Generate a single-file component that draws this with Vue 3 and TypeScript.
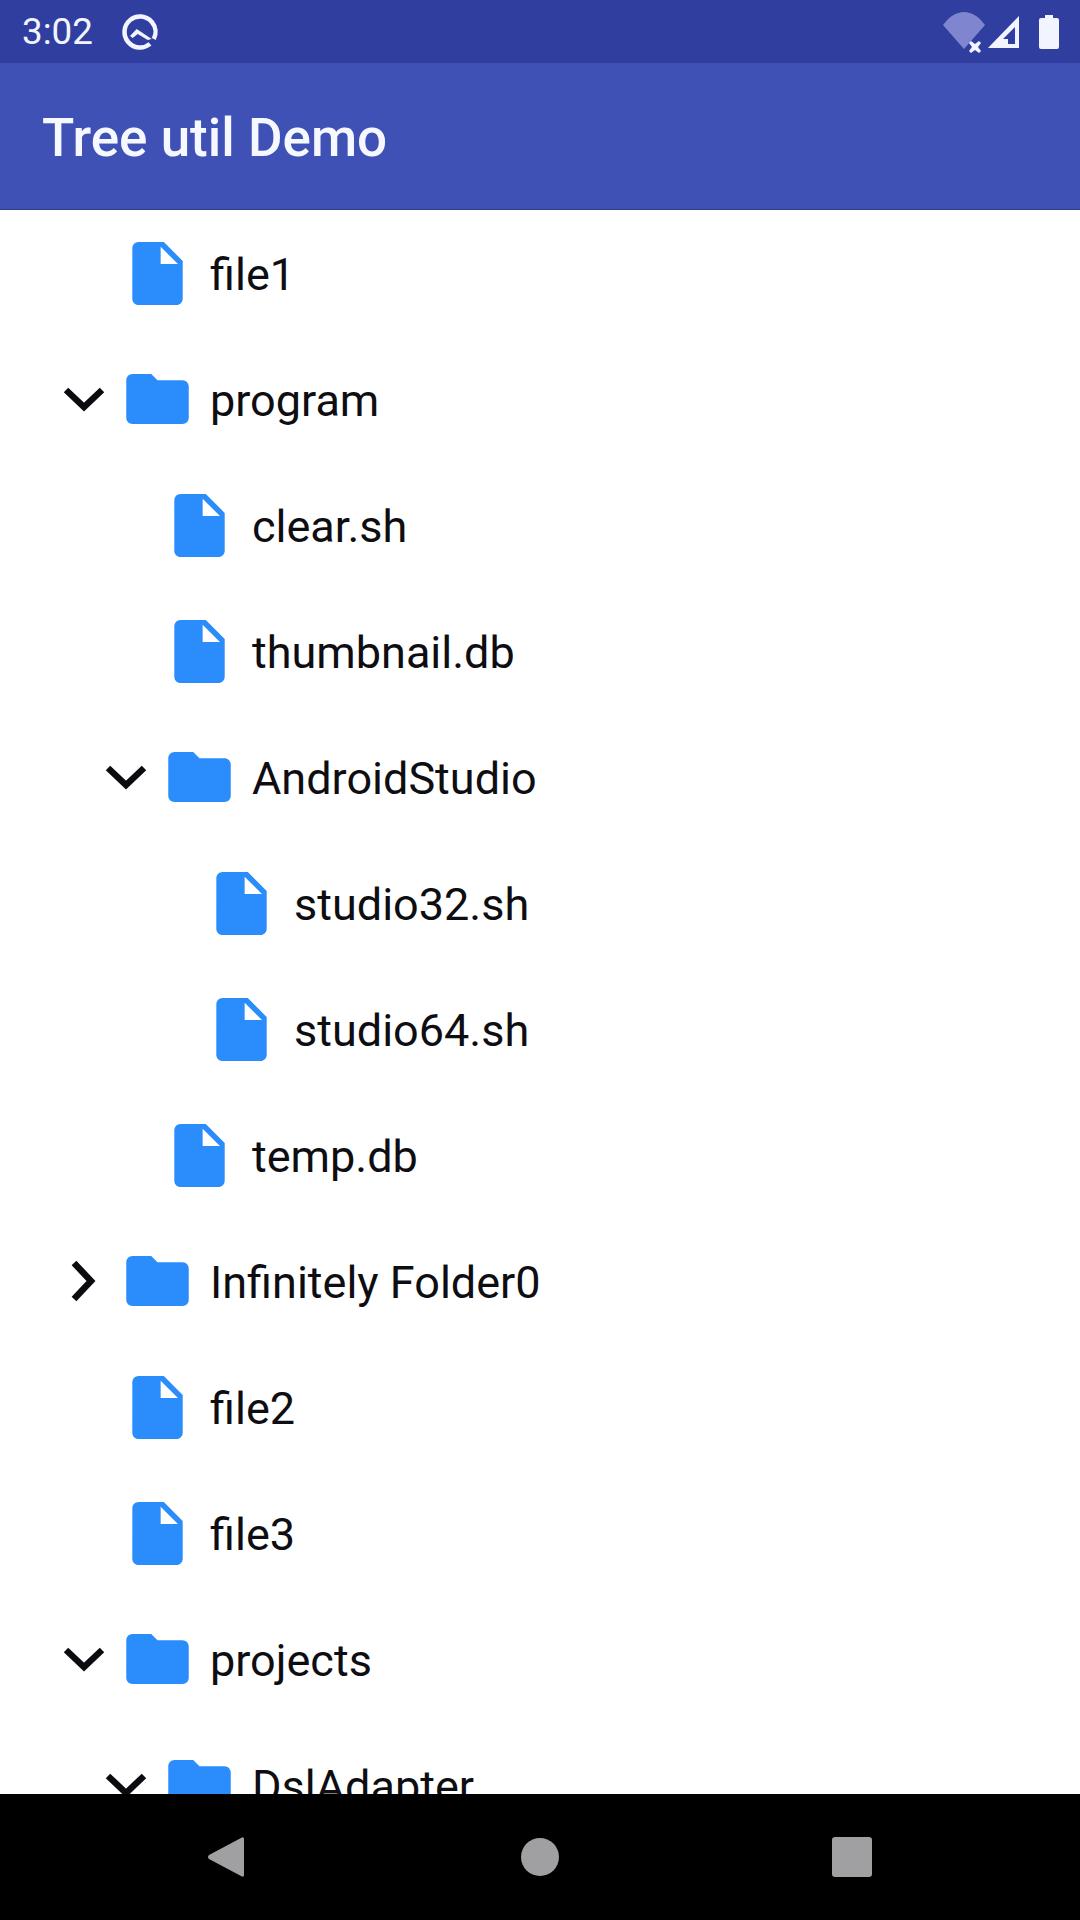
<script setup lang="ts">
interface Row { label: string; depth: number; kind: 'file' | 'open' | 'closed' }
const rows: Row[] = [
  { label: 'file1', depth: 0, kind: 'file' },
  { label: 'program', depth: 0, kind: 'open' },
  { label: 'clear.sh', depth: 1, kind: 'file' },
  { label: 'thumbnail.db', depth: 1, kind: 'file' },
  { label: 'AndroidStudio', depth: 1, kind: 'open' },
  { label: 'studio32.sh', depth: 2, kind: 'file' },
  { label: 'studio64.sh', depth: 2, kind: 'file' },
  { label: 'temp.db', depth: 1, kind: 'file' },
  { label: 'Infinitely Folder0', depth: 0, kind: 'closed' },
  { label: 'file2', depth: 0, kind: 'file' },
  { label: 'file3', depth: 0, kind: 'file' },
  { label: 'projects', depth: 0, kind: 'open' },
  { label: 'DslAdapter', depth: 1, kind: 'open' },
]
</script>

<template>
  <div class="screen">
    <header class="appbar">
      <div class="status">
        <span class="time">3:02</span>
        <svg class="notif" width="40" height="40" viewBox="0 0 40 40">
          <circle cx="20" cy="20" r="15.5" fill="none" stroke="#f2f4ff" stroke-width="4.5" stroke-dasharray="90.6 6.8" transform="rotate(50 20 20)" />
          <path d="M10 24l6.7-7 15 10-4 1-10-6-5 4z" fill="#f2f4ff" />
        </svg>
        <span class="spacer"></span>
        <svg class="wifi" width="46" height="48" viewBox="0 -3 46 48">
          <path d="M3 14C9 6 16 1 24 1s15 5 21 13L24 38z" fill="#7f86cf" />
          <path d="M31 30l4 3 4-3 2 2-3 4 3 4-2 2-4-3-4 3-2-2 3-4-3-4z" fill="#f2f4ff" />
        </svg>
        <svg class="signal" width="34" height="34" viewBox="0 0 34 34">
          <path fill-rule="evenodd" d="M33 1v32H2zM29 12L12 29h17z" fill="#f2f4ff" />
          <path d="M11 24h11v6H8z" fill="#f2f4ff" />
        </svg>
        <svg class="battery" width="20" height="34" viewBox="0 0 20 34">
          <path d="M6 0h8v3h4a2 2 0 0 1 2 2v27a2 2 0 0 1-2 2H2a2 2 0 0 1-2-2V5a2 2 0 0 1 2-2h4z" fill="#f2f4ff" />
        </svg>
      </div>
      <div class="toolbar">Tree util Demo</div>
    </header>

    <main class="tree">
      <div v-for="row in rows" :key="row.label" class="row" :class="'depth' + row.depth">
        <span class="arrow">
          <svg v-if="row.kind === 'open'" class="open" width="42" height="26" viewBox="0 0 42 26">
            <path d="M3 4l18 17L39 4" fill="none" stroke="#0c0c10" stroke-width="6.5" />
          </svg>
          <svg v-else-if="row.kind === 'closed'" class="closed" width="26" height="42" viewBox="0 0 26 42">
            <path d="M4 3l17 18L4 39" fill="none" stroke="#0c0c10" stroke-width="6.5" />
          </svg>
        </span>
        <svg v-if="row.kind === 'file'" class="icon file" width="51" height="63" viewBox="4 2 16 20">
          <path fill-rule="evenodd" d="M14 2H6c-1.1 0-1.99.9-1.99 2L4 20c0 1.1.89 2 1.99 2H18c1.1 0 2-.9 2-2V8l-6-6zm-1 7V3.5L18.5 9H13z" fill="#2b8cfc" />
        </svg>
        <svg v-else class="icon folder" width="63" height="50" viewBox="2 4 20 16">
          <path d="M10 4H4c-1.1 0-1.99.9-1.99 2L2 18c0 1.1.9 2 2 2h16c1.1 0 2-.9 2-2V8c0-1.1-.9-2-2-2h-8l-2-2z" fill="#2b8cfc" />
        </svg>
        <span class="label">{{ row.label }}</span>
      </div>
    </main>

    <nav class="navbar">
      <svg width="38" height="42" viewBox="0 0 38 42"><path d="M37 3v36q0 3-3 1L2 23q-2-2 0-4L34 2q3-2 3 1z" fill="#a0a0a2" /></svg>
      <span class="home"></span>
      <span class="recent"></span>
    </nav>
  </div>
</template>

<style scoped>
.screen {
  width: 1080px;
  height: 1920px;
  display: flex;
  flex-direction: column;
  background: #fff;
  overflow: hidden;
  font-family: Roboto, "Liberation Sans", sans-serif;
}
.appbar {
  flex: none;
  height: 210px;
  background: #3f51b5;
}
.status {
  height: 63px;
  background: #303f9f;
  display: flex;
  align-items: center;
  padding: 0 21px 0 22px;
  color: #f2f4ff;
}
.time {
  font-size: 36.75px;
  margin-right: 27px;
}
.spacer { flex: 1; }
.signal { margin-right: 19px; }
.toolbar {
  box-sizing: border-box;
  height: 147px;
  display: flex;
  align-items: center;
  padding: 3px 0 0 42px;
  border-bottom: 1px solid #2f3b8c;
  color: #f6f8ff;
  font-size: 53px;
  font-weight: 500;
}
.tree {
  flex: 1;
  min-height: 0;
  overflow: hidden;
}
.row {
  height: 126px;
  display: flex;
  align-items: center;
}
.depth0 { padding-left: 62px; }
.depth1 { padding-left: 104px; }
.depth2 { padding-left: 146px; }
.arrow {
  width: 64px;
  height: 50px;
  flex: none;
  display: flex;
  align-items: center;
}
.open { margin-left: 1px; }
.closed { margin-left: 8px; }
.icon { flex: none; }
.file { margin-left: 6px; margin-right: 27px; }
.folder { margin-right: 21px; }
.label {
  font-size: 45px;
  padding-top: 2px;
  color: #0e0e12;
  white-space: nowrap;
}
.navbar {
  flex: none;
  height: 126px;
  background: #000;
  display: flex;
  align-items: center;
  padding-left: 207px;
}
.home {
  width: 38px;
  height: 38px;
  border-radius: 50%;
  background: #a0a0a2;
  margin-left: 276px;
}
.recent {
  width: 40px;
  height: 40px;
  border-radius: 3px;
  background: #a0a0a2;
  margin-left: 273px;
}
</style>
